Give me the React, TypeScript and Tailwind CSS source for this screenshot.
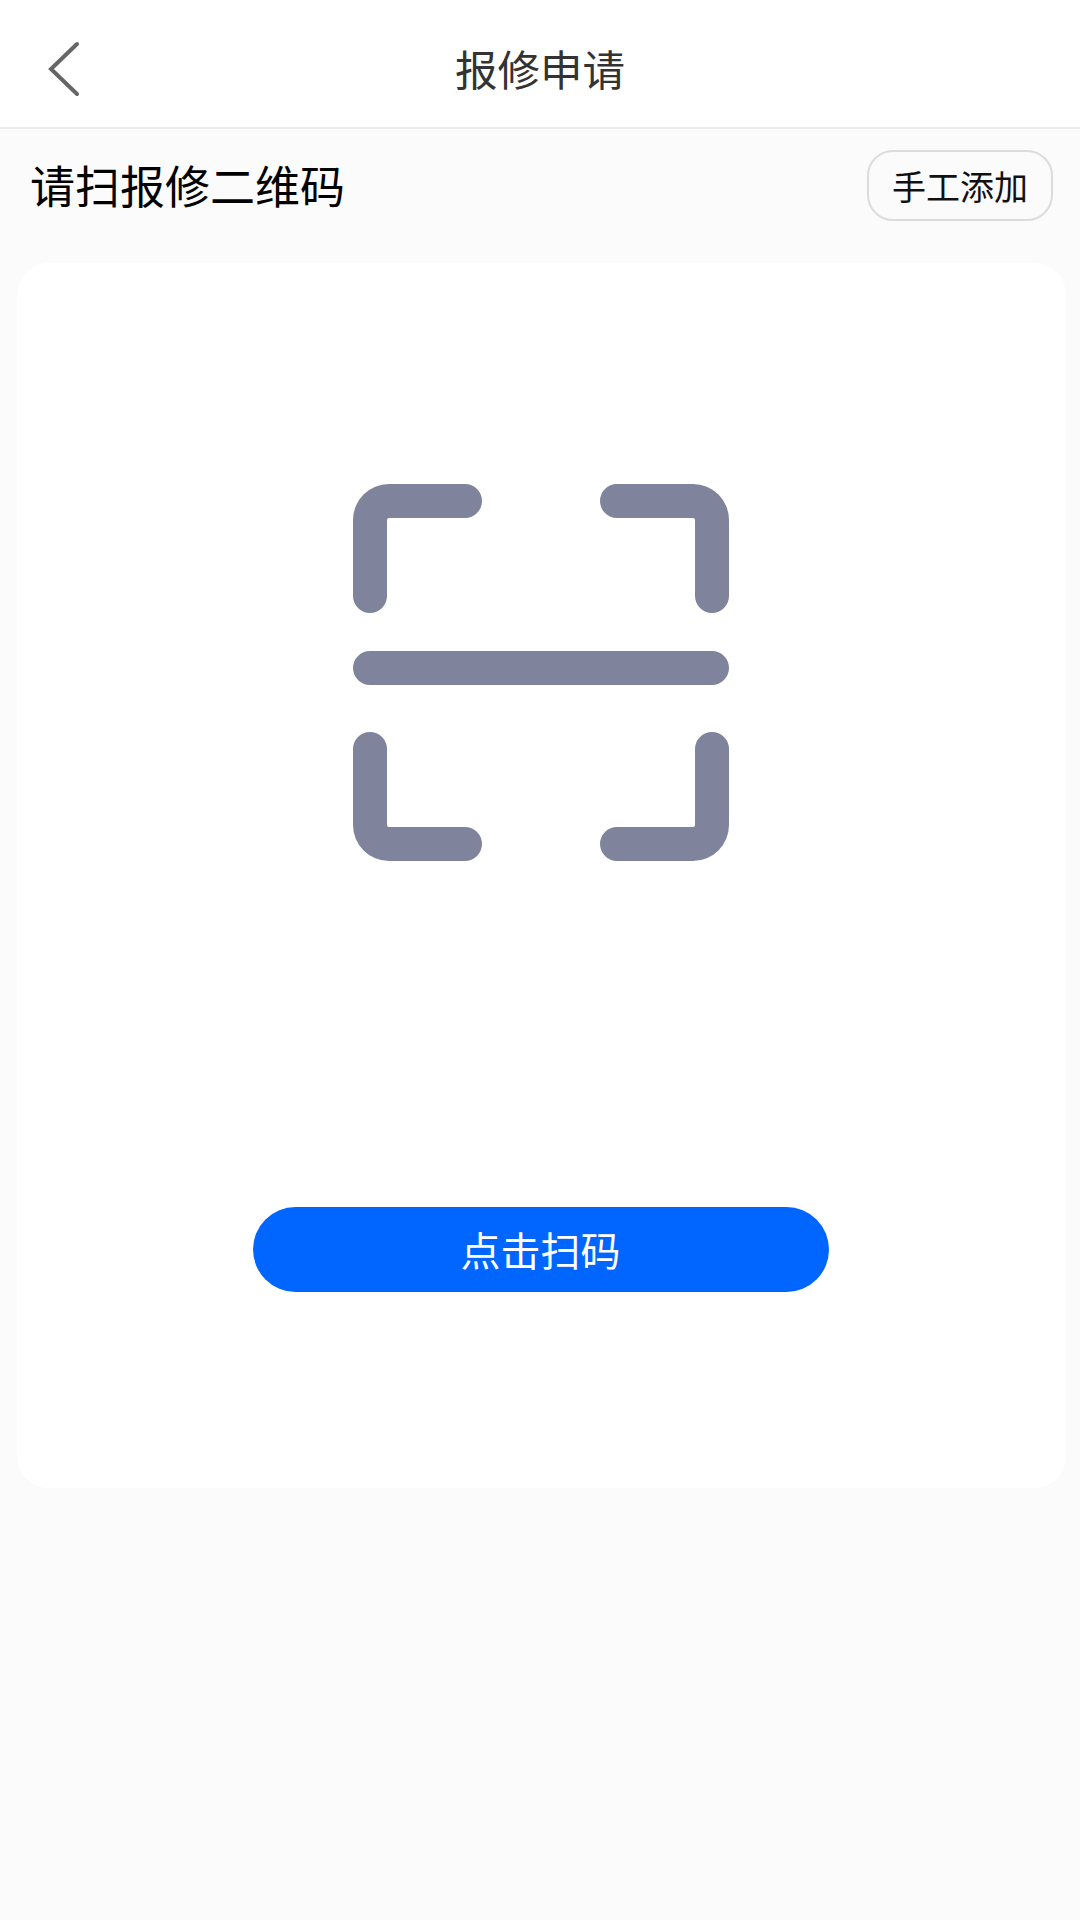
const cjk = "font-['Noto_Sans_CJK_SC','Liberation_Sans',sans-serif]";

const corner = "M34 36Q34 34 36 34H112A17 17 0 0 0 112 0H36A36 36 0 0 0 0 36V112A17 17 0 0 0 34 112Z";

function ScanIcon() {
  return (
    <svg className="mr-[1px]" width="376" height="377" viewBox="0 0 376 377" fill="#7f849c">
      <path d={corner} />
      <path d={corner} transform="matrix(-1 0 0 1 376 0)" />
      <path d={corner} transform="matrix(1 0 0 -1 0 377)" />
      <path d={corner} transform="matrix(-1 0 0 -1 376 377)" />
      <rect x="0" y="167" width="376" height="34" rx="17" />
    </svg>
  );
}

export default function App() {
  return (
    <div className={`flex h-[1920px] w-[1080px] flex-col bg-[#fbfbfb] ${cjk}`}>
      <header className="relative flex h-[129px] shrink-0 items-center justify-center border-b-2 border-[#ebebeb] bg-white pt-[9px]">
        <svg className="absolute left-[46px] top-[40px]" width="36" height="58" viewBox="0 0 36 58" fill="none">
          <path d="M31 4 5 29l26 25" stroke="#666666" strokeWidth="4" strokeLinecap="round" strokeLinejoin="miter" />
        </svg>
        <h1 className="text-[42.5px] leading-none text-[#333333]">报修申请</h1>
      </header>

      <div className="flex h-[134px] shrink-0 items-start justify-between pl-[30px] pr-[27px] pt-[21px]">
        <h2 className="mt-[5px] text-[45px] leading-[60px] text-black">请扫报修二维码</h2>
        <button className="flex h-[71px] w-[186px] items-center justify-center rounded-[26px] border-2 border-[#dcdcdc] text-[34px] leading-none text-[#111111]">
          手工添加
        </button>
      </div>

      <main className="ml-[17px] flex h-[1225px] w-[1049px] flex-col items-center rounded-[32px] bg-white pt-[221px]">
        <ScanIcon />
        <button className="mr-[2px] mt-[346px] flex h-[85px] w-[576px] items-center justify-center rounded-full bg-[#0066ff] pb-[2px] text-[40px] leading-none text-white">
          点击扫码
        </button>
      </main>
    </div>
  );
}
